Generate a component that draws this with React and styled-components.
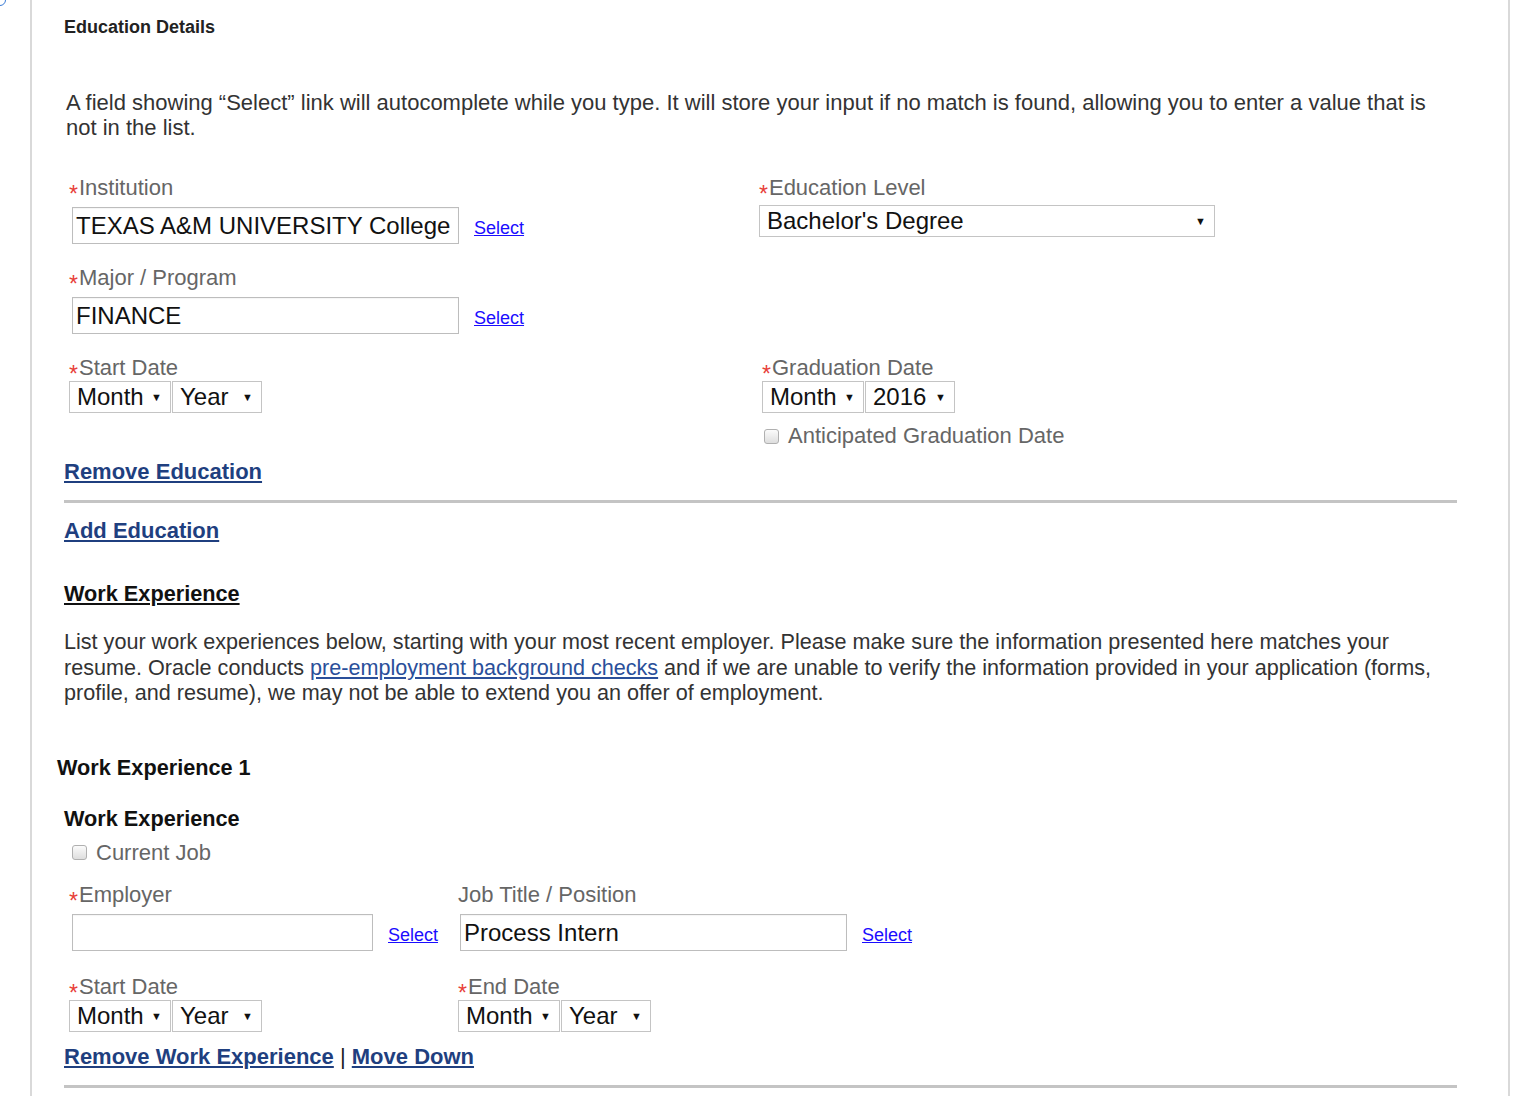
import React from 'react';
import styled, { createGlobalStyle } from 'styled-components';

const Global = createGlobalStyle`
  body {
    margin: 0;
    background: #fff;
    font-family: "Liberation Sans", Arial, sans-serif;
    color: #333;
  }
`;

const Page = styled.div`
  position: relative;
  width: 1536px;
  height: 1096px;
  overflow: hidden;
  background: #fff;
`;

const Frame = styled.div`
  margin-left: 30px;
  width: 1480px;
  min-height: 1096px;
  border-left: 2px solid #d9d9d9;
  border-right: 2px solid #d9d9d9;
  box-sizing: border-box;
  padding: 15px 51px 0 32px;
`;

const CornerIcon = styled.div`
  position: absolute;
  left: -6px;
  top: -6px;
  width: 10px;
  height: 10px;
  border: 1.5px solid #3a7bd5;
  border-radius: 50%;
`;

const SectionTitle = styled.div`
  font-size: 18px;
  font-weight: bold;
  color: #222;
  height: 24px;
  line-height: 24px;
`;

const Intro = styled.p`
  margin: 51px 0 0 2px;
  font-size: 22px;
  line-height: 25px;
  color: #333;
`;

const TwoCol = styled.div`
  display: grid;
  grid-template-columns: ${(p) => p.$left}px 1fr;
  margin-left: 4px;
  margin-top: ${(p) => p.$mt || 0}px;
`;

const Field = styled.div`
  display: flex;
  flex-direction: column;
  padding-top: ${(p) => p.$top || 0}px;
`;

const Label = styled.div`
  font-size: 22px;
  line-height: 24px;
  height: 24px;
  color: #666;
  margin-left: 1px;
  white-space: nowrap;
`;

const Star = styled.span`
  display: inline-block;
  color: #e8403a;
  font-size: 23px;
  line-height: 0;
  position: relative;
  top: 7px;
  margin-right: 1px;
`;

const InputRow = styled.div`
  display: flex;
  align-items: center;
  margin-top: ${(p) => p.$mt ?? 7}px;
  margin-left: ${(p) => p.$ml ?? 4}px;
`;

const TextBox = styled.div`
  width: ${(p) => p.$w}px;
  height: 37px;
  box-sizing: border-box;
  border: 1px solid #bdbdbd;
  box-shadow: inset 0 1px 1px rgba(0, 0, 0, 0.04);
  font-size: 24px;
  line-height: 35px;
  padding-left: 3px;
  color: #111;
  white-space: nowrap;
  overflow: hidden;
`;

const SelectLink = styled.a`
  margin-left: 15px;
  margin-top: 6px;
  font-size: 18px;
  color: #1a0dff;
  text-decoration: underline;
  cursor: pointer;
`;

const Dropdown = styled.div`
  width: ${(p) => p.$w}px;
  height: 32px;
  box-sizing: border-box;
  border: 1px solid #c4c4c4;
  display: flex;
  align-items: center;
  justify-content: space-between;
  padding: 0 8px 0 7px;
  font-size: 24px;
  color: #111;
  background: #fff;
  & + & {
    margin-left: 1px;
  }
`;

const Caret = styled.span`
  font-size: 11px;
  color: #111;
`;

const DateRow = styled.div`
  display: flex;
  margin-top: 1px;
  margin-left: 1px;
`;

const CheckRow = styled.label`
  display: flex;
  align-items: center;
  gap: 9px;
  font-size: 22px;
  line-height: 24px;
  color: #666;
  margin: ${(p) => p.$m || '0'};
`;

const Box = styled.span`
  width: 15px;
  height: 15px;
  border: 1px solid #b0b0b0;
  border-radius: 3px;
  background: linear-gradient(#fbfbfb, #dedede);
  box-sizing: border-box;
`;

const ActionLink = styled.a`
  font-size: 22px;
  font-weight: bold;
  color: #1f3f7f;
  text-decoration: underline;
  cursor: pointer;
`;

const ActionRow = styled.div`
  margin-top: ${(p) => p.$mt || 0}px;
  line-height: 24px;
  color: #222;
  font-size: 22px;
`;

const Rule = styled.hr`
  border: 0;
  height: 3px;
  background: #c4c4c4;
  margin: ${(p) => p.$mt}px 0 0 0;
`;

const Heading = styled.div`
  font-size: 21.7px;
  font-weight: bold;
  color: #111;
  line-height: 24px;
  margin-top: ${(p) => p.$mt || 0}px;
  margin-left: ${(p) => p.$ml || 0}px;
  text-decoration: ${(p) => (p.$u ? 'underline' : 'none')};
`;

const Body = styled.p`
  margin: 23px 0 0 0;
  font-size: 21.6px;
  line-height: 25.5px;
  color: #333;
  a {
    color: #2a4f9a;
    text-decoration: underline;
  }
`;

const Req = ({ children }) => (
  <Label>
    <Star>*</Star>
    {children}
  </Label>
);

const Select = ({ w, children }) => (
  <Dropdown $w={w}>
    {children}
    <Caret>▼</Caret>
  </Dropdown>
);

const MonthYear = ({ year = 'Year', yearW = 90 }) => (
  <DateRow>
    <Select w={102}>Month</Select>
    <Select w={yearW}>{year}</Select>
  </DateRow>
);

export default function App() {
  return (
    <Page>
      <Global />
      <CornerIcon />
      <Frame>
        <SectionTitle>Education Details</SectionTitle>
        <Intro>
          A field showing “Select” link will autocomplete while you type. It will store your input if
          no match is found, allowing you to enter a value that is not in the list.
        </Intro>

        <TwoCol $left={690} $mt={36}>
          <Field>
            <Req>Institution</Req>
            <InputRow>
              <TextBox $w={387}>TEXAS A&amp;M UNIVERSITY College</TextBox>
              <SelectLink>Select</SelectLink>
            </InputRow>
          </Field>
          <Field>
            <Req>Education Level</Req>
            <InputRow $mt={5} $ml={1}>
              <Dropdown $w={456}>
                Bachelor's Degree
                <Caret>▼</Caret>
              </Dropdown>
            </InputRow>
          </Field>
        </TwoCol>

        <TwoCol $left={690}>
          <Field $top={22}>
            <Req>Major / Program</Req>
            <InputRow>
              <TextBox $w={387}>FINANCE</TextBox>
              <SelectLink>Select</SelectLink>
            </InputRow>
          </Field>
        </TwoCol>

        <TwoCol $left={693}>
          <Field $top={22}>
            <Req>Start Date</Req>
            <MonthYear />
          </Field>
          <Field $top={22}>
            <Req>Graduation Date</Req>
            <MonthYear year="2016" />
            <CheckRow $m="11px 0 0 3px">
              <Box />
              Anticipated Graduation Date
            </CheckRow>
          </Field>
        </TwoCol>

        <ActionRow $mt={12}>
          <ActionLink>Remove Education</ActionLink>
        </ActionRow>
        <Rule $mt={16} />
        <ActionRow $mt={16}>
          <ActionLink>Add Education</ActionLink>
        </ActionRow>

        <Heading $mt={39} $u>
          Work Experience
        </Heading>
        <Body>
          List your work experiences below, starting with your most recent employer. Please make sure
          the information presented here matches your resume. Oracle conducts{' '}
          <a>pre-employment background checks</a> and if we are unable to verify the information
          provided in your application (forms, profile, and resume), we may not be able to extend you
          an offer of employment.
        </Body>

        <Heading $mt={50} $ml={-7}>
          Work Experience 1
        </Heading>
        <Heading $mt={27}>Work Experience</Heading>
        <CheckRow $m="10px 0 0 8px">
          <Box />
          Current Job
        </CheckRow>

        <TwoCol $left={389} $mt={18}>
          <Field>
            <Req>Employer</Req>
            <InputRow>
              <TextBox $w={301} />
              <SelectLink>Select</SelectLink>
            </InputRow>
          </Field>
          <Field>
            <Label>Job Title / Position</Label>
            <InputRow $ml={3}>
              <TextBox $w={387}>Process Intern</TextBox>
              <SelectLink>Select</SelectLink>
            </InputRow>
          </Field>
        </TwoCol>

        <TwoCol $left={389}>
          <Field $top={24}>
            <Req>Start Date</Req>
            <MonthYear />
          </Field>
          <Field $top={24}>
            <Req>End Date</Req>
            <MonthYear />
          </Field>
        </TwoCol>

        <ActionRow $mt={13}>
          <ActionLink>Remove Work Experience</ActionLink> | <ActionLink>Move Down</ActionLink>
        </ActionRow>
        <Rule $mt={16} />
      </Frame>
    </Page>
  );
}
